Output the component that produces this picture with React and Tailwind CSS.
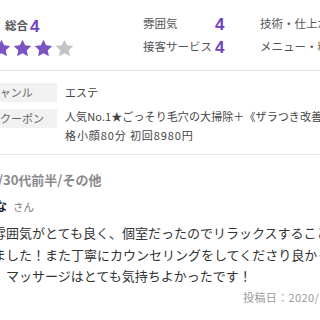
const FONT = { fontFamily: '"Noto Sans CJK JP", "Noto Sans", sans-serif' }

function Star({ on }) {
  return (
    <svg width="19" height="18" viewBox="0 0 24 23">
      <path
        d="M12 0.8l3.4 7.1 7.8 1-5.7 5.4 1.4 7.7L12 18.3 5.1 22l1.4-7.7L0.8 8.9l7.8-1z"
        fill={on ? '#7b54c3' : '#c4c4c4'}
      />
    </svg>
  )
}

function Score({ label, value }) {
  return (
    <div className="flex h-[22px] items-center">
      <span className="w-[72px] whitespace-nowrap text-[11.5px] text-[#555]">{label}</span>
      <span className="text-[17px] font-bold leading-none text-[#6f42c1]" style={{ fontFamily: '"Liberation Sans", sans-serif' }}>
        {value}
      </span>
    </div>
  )
}

export default function App() {
  return (
    <div className="h-[320px] w-[320px] overflow-hidden bg-white" style={FONT}>
      {/* ratings */}
      <div className="flex h-[71px] border-b border-[#e6e6e6]">
        <div className="w-[143px] shrink-0 pt-[14px]">
          <div className="flex h-[24px] items-center pl-[5px]">
            <span className="text-[11.5px] font-bold text-[#555]">総合</span>
            <span className="ml-[2px] text-[17px] font-bold leading-none text-[#6f42c1]" style={{ fontFamily: '"Liberation Sans", sans-serif' }}>
              4
            </span>
          </div>
          <div className="-ml-[29px] flex h-[20px] items-center gap-[2px]">
            <Star on />
            <Star on />
            <Star on />
            <Star on />
            <Star />
          </div>
        </div>
        <div className="w-[117px] shrink-0 pt-[13px]">
          <Score label="雰囲気" value="4" />
          <div className="h-[1px]" />
          <Score label="接客サービス" value="4" />
        </div>
        <div className="shrink-0 pt-[13px] text-[11.5px] text-[#555]">
          <div className="flex h-[22px] items-center whitespace-nowrap">技術・仕上がり</div>
          <div className="h-[1px]" />
          <div className="flex h-[22px] items-center whitespace-nowrap">メニュー・料金</div>
        </div>
      </div>

      {/* detail table */}
      <div className="flex h-[84px] flex-col gap-[5px] border-b border-[#e6e6e6] pt-[12px]">
        <div className="flex items-start">
          <div className="-ml-[35px] flex h-[19px] w-[92px] shrink-0 items-center justify-center bg-[#f1f1f1] text-[11px] text-[#666]">
            ジャンル
          </div>
          <div className="ml-[8px] whitespace-nowrap text-[11px] leading-[19px] text-[#444]">エステ</div>
        </div>
        <div className="flex items-start">
          <div className="-ml-[35px] mt-[2px] flex h-[19px] w-[92px] shrink-0 items-center justify-center bg-[#f1f1f1] text-[11px] text-[#666]">
            利用クーポン
          </div>
          <div className="ml-[8px] whitespace-nowrap text-[11px] leading-[19px] text-[#444]">
            <div className="tracking-[0.1px]">人気No.1★ごっそり毛穴の大掃除＋《ザラつき改善》</div>
            <div className="tracking-[0.9px]">格小顔80分 初回8980円</div>
          </div>
        </div>
      </div>

      {/* review */}
      <div className="pt-[15px]">
        <div className="-ml-[28px] whitespace-nowrap text-[13px] font-bold leading-[20px] text-[#8a8a8a]">
          女性/30代前半/その他
        </div>
        <div className="-ml-[29px] mt-[6px] flex items-baseline whitespace-nowrap leading-[20px]">
          <span className="text-[12px] font-bold text-[#222]">ゆうな</span>
          <span className="ml-[6px] text-[10.5px] text-[#777]">さん</span>
        </div>
        <div className="-ml-[7px] mt-[5px] whitespace-pre text-[13px] leading-[21.5px] text-[#333]">
          {'雰囲気がとても良く、個室だったのでリラックスすることができ\nました！また丁寧にカウンセリングをしてくださり良かったです。\n　マッサージはとても気持ちよかったです！'}
        </div>
        <div className="ml-[243px] whitespace-nowrap text-[11px] leading-[20px] tracking-[0.4px] text-[#999]">
          投稿日：2020/10/12
        </div>
      </div>
    </div>
  )
}
